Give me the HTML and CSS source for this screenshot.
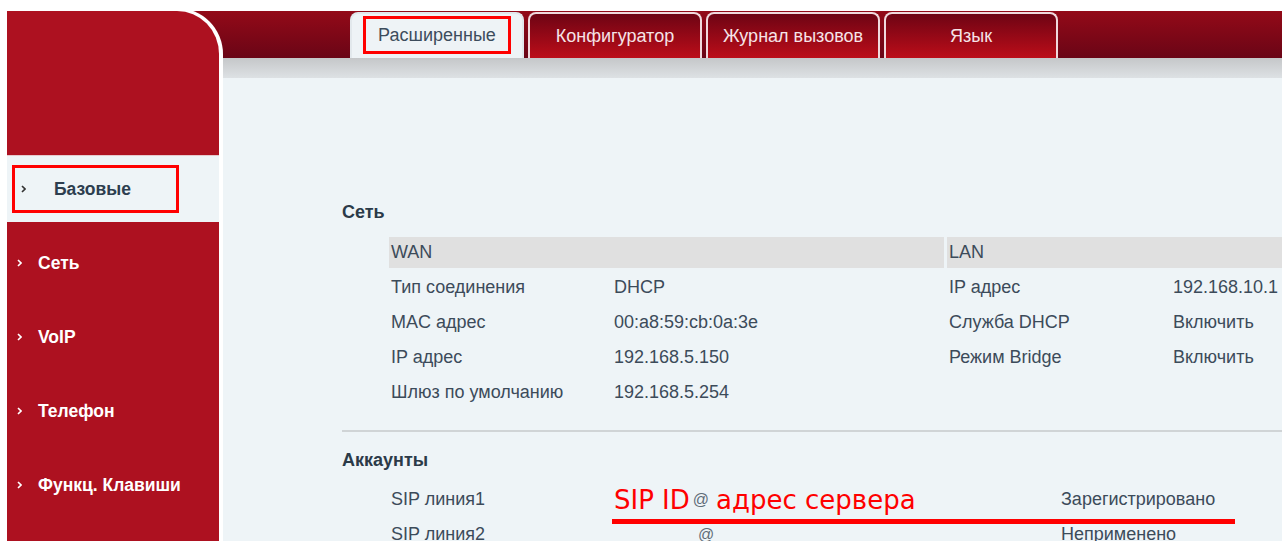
FILE: index.html
```html
<!DOCTYPE html>
<html lang="ru">
<head>
<meta charset="utf-8">
<title>Базовые</title>
<link rel="stylesheet" href="styles.css">
</head>
<body>
<div class="page">
  <aside class="sidebar">
    <div class="side-panel">
      <div class="logo-area"></div>
      <nav class="menu">
        <a class="menu-item active">
          <span class="mark-box">
            <svg class="chev" width="5" height="8" viewBox="0 0 5 8"><polyline points="1,1 4,4 1,7" fill="none" stroke="currentColor" stroke-width="1.6"/></svg>
            <span class="menu-label">Базовые</span>
          </span>
        </a>
        <div class="menu-list">
          <a class="menu-item">
            <svg class="chev" width="5" height="8" viewBox="0 0 5 8"><polyline points="1,1 4,4 1,7" fill="none" stroke="currentColor" stroke-width="1.6"/></svg>
            <span class="menu-label">Сеть</span>
          </a>
          <a class="menu-item">
            <svg class="chev" width="5" height="8" viewBox="0 0 5 8"><polyline points="1,1 4,4 1,7" fill="none" stroke="currentColor" stroke-width="1.6"/></svg>
            <span class="menu-label">VoIP</span>
          </a>
          <a class="menu-item">
            <svg class="chev" width="5" height="8" viewBox="0 0 5 8"><polyline points="1,1 4,4 1,7" fill="none" stroke="currentColor" stroke-width="1.6"/></svg>
            <span class="menu-label">Телефон</span>
          </a>
          <a class="menu-item">
            <svg class="chev" width="5" height="8" viewBox="0 0 5 8"><polyline points="1,1 4,4 1,7" fill="none" stroke="currentColor" stroke-width="1.6"/></svg>
            <span class="menu-label">Функц. Клавиши</span>
          </a>
        </div>
      </nav>
    </div>
  </aside>

  <div class="main">
    <header class="topbar">
      <a class="tab active"><span class="mark-tab">Расширенные</span></a>
      <a class="tab">Конфигуратор</a>
      <a class="tab">Журнал вызовов</a>
      <a class="tab">Язык</a>
    </header>
    <div class="subbar"></div>

    <main class="content">
      <section class="block">
        <h2 class="block-title">Сеть</h2>
        <table class="grid net">
          <colgroup>
            <col class="c-label"><col class="c-value"><col class="c-label2"><col class="c-value2">
          </colgroup>
          <tr>
            <th colspan="2" class="group">WAN</th>
            <th colspan="2" class="group group-right">LAN</th>
          </tr>
          <tr>
            <td>Тип соединения</td><td>DHCP</td>
            <td class="pad-right">IP адрес</td><td>192.168.10.1</td>
          </tr>
          <tr>
            <td>MAC адрес</td><td>00:a8:59:cb:0a:3e</td>
            <td class="pad-right">Служба DHCP</td><td>Включить</td>
          </tr>
          <tr>
            <td>IP адрес</td><td>192.168.5.150</td>
            <td class="pad-right">Режим Bridge</td><td>Включить</td>
          </tr>
          <tr>
            <td>Шлюз по умолчанию</td><td>192.168.5.254</td>
            <td></td><td></td>
          </tr>
        </table>
      </section>

      <div class="divider"></div>

      <section class="block accounts">
        <h2 class="block-title title-accounts">Аккаунты</h2>
        <table class="grid acct">
          <colgroup>
            <col class="c-label"><col class="c-acct"><col class="c-status">
          </colgroup>
          <tr>
            <td>SIP линия1</td>
            <td>
              <div class="sip-value sip-first">
                <span class="hint">SIP ID</span><span class="at">@</span><span class="hint">адрес сервера</span>
              </div>
            </td>
            <td>Зарегистрировано</td>
          </tr>
          <tr>
            <td>SIP линия2</td>
            <td><div class="sip-value sip-second"><span class="at">@</span></div></td>
            <td>Неприменено</td>
          </tr>
        </table>
        <div class="hint-line"></div>
      </section>
    </main>
  </div>
</div>
</body>
</html>
```

FILE: styles.css
```css
html, body {
  margin: 0;
  height: 100%;
  overflow: hidden;
  background: #fff;
}

body {
  font-family: "Liberation Sans", Arial, sans-serif;
  font-size: 18px;
  color: #3c4b5a;
}

a { text-decoration: none; color: inherit; }

.page {
  display: flex;
  box-sizing: border-box;
  height: 100%;
  padding: 8px 0 0 7px;
}

/* ---------- left menu ---------- */
.sidebar {
  width: 216px;
  flex: none;
  display: flex;
  flex-direction: column;
  /* the header band shows behind the rounded corner */
  background: linear-gradient(#930a18, #6a0516) no-repeat 0 3px / 100% 47px;
}

.side-panel {
  flex: 1;
  background: #ad1120;
  border-top: 3px solid #fff;
  border-right: 4px solid #fff;
  border-top-right-radius: 46px;
}

.logo-area { height: 144px; }

.menu-item {
  height: 74px;
  display: flex;
  align-items: center;
  gap: 16px;
  padding-left: 10px;
  color: #fff;
  font-size: 17.5px;
  font-weight: bold;
}

.menu-item .chev { flex: none; }

.menu-item.active {
  height: 67px;
  padding-left: 5px;
  background: #eef4f7;
  color: #2d3e4f;
  border-top: 1px solid #e6c9cd;
  box-sizing: border-box;
}

.mark-box {
  display: flex;
  align-items: center;
  gap: 28px;
  box-sizing: border-box;
  width: 167px;
  height: 48px;
  padding-left: 6px;
  border: 3px solid #ff0000;
}

.mark-box .chev { color: #333; }

.menu-list { padding-top: 4px; }

/* ---------- top tabs ---------- */
.main {
  flex: 1;
  min-width: 0;
  display: flex;
  flex-direction: column;
  padding-top: 3px;
}

.topbar {
  height: 47px;
  flex: none;
  display: flex;
  align-items: flex-end;
  gap: 4px;
  padding-left: 127px;
  background: linear-gradient(#930a18, #6a0516);
}

.tab {
  width: 174px;
  height: 46px;
  box-sizing: border-box;
  display: flex;
  align-items: center;
  justify-content: center;
  border: 2px solid #f0d9dd;
  border-bottom: none;
  border-radius: 8px 8px 0 0;
  background: linear-gradient(#6e0414, #bc0d19);
  color: #f6e3e7;
  font-size: 18px;
}

.tab.active {
  background: #eef3f6;
  border-color: #e2e8ec;
  color: #3c4c5c;
}

.mark-tab {
  box-sizing: border-box;
  height: 38px;
  display: flex;
  align-items: center;
  padding: 0 12px;
  border: 3px solid #ff0000;
  margin-top: -2px;
}

.subbar {
  height: 20px;
  flex: none;
  background: linear-gradient(#c5c7c9, #dde1e4);
}

/* ---------- content ---------- */
.content {
  flex: 1;
  background: #eef4f7;
  padding: 124px 0 0 119px;
}

.block { position: relative; }

.block-title {
  margin: 0;
  font-size: 18px;
  line-height: 20px;
  font-weight: bold;
  color: #2b3a48;
}

.grid {
  border-collapse: separate;
  border-spacing: 0;
  table-layout: fixed;
  margin-left: 47px;
}

.grid td {
  height: 35px;
  padding: 0 0 0 2px;
  white-space: nowrap;
  vertical-align: middle;
}

.net { width: 1082px; margin-top: 15px; }
.net .c-label { width: 223px; }
.net .c-value { width: 332px; }
.net .c-label2 { width: 227px; }
.net .c-value2 { width: 300px; }

.net th.group {
  height: 31px;
  padding: 0 0 0 2px;
  text-align: left;
  font-weight: normal;
  background: #e0e0e0;
  background-clip: padding-box;
  border-bottom: 2px solid transparent;
}

.net th.group-right { border-left: 3px solid transparent; }
.net td.pad-right { padding-left: 5px; }

.divider {
  height: 2px;
  margin-top: 20px;
  background: #d0d4d6;
}

.title-accounts { margin-top: 18px; }

.acct { width: 970px; margin-top: 12px; }
.acct .c-label { width: 223px; }
.acct .c-acct { width: 447px; }
.acct .c-status { width: 300px; }

.sip-value {
  display: flex;
  align-items: baseline;
}

.at {
  font-size: 16px;
  color: #5f6c78;
}

.hint {
  font-family: "DejaVu Sans", sans-serif;
  font-size: 26px;
  line-height: 30px;
  color: #ff0000;
}

.sip-first { gap: 3px; }
.sip-first .at {
  align-self: center;
  margin: 0 4px 0 0;
}
.sip-second { padding-left: 84px; }

/* red underline drawn over the first account row */
.hint-line {
  position: absolute;
  left: 270px;
  top: 69px;
  width: 623px;
  height: 5px;
  background: #ff0000;
}
```
